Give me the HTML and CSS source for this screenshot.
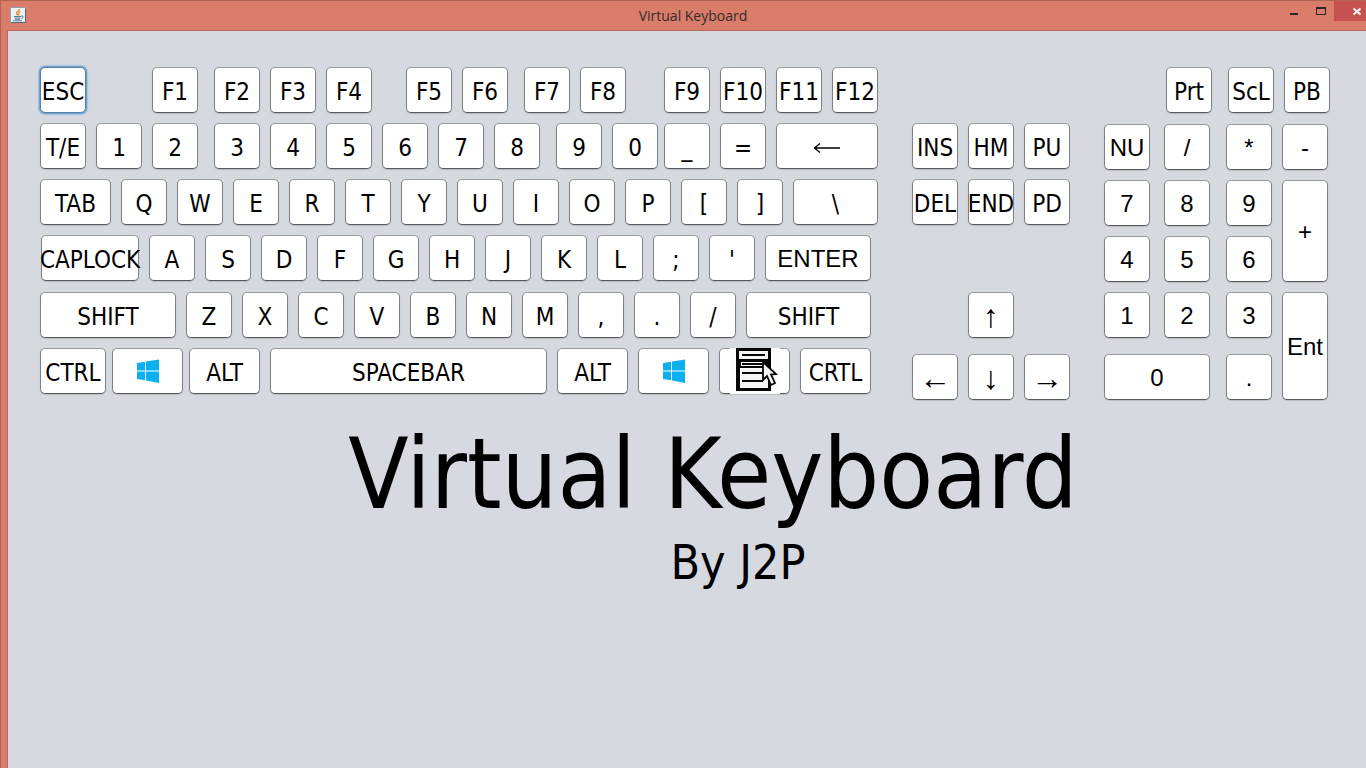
FILE: index.html
```html
<!DOCTYPE html>
<html lang="en">
<head>
<meta charset="utf-8">
<title>Virtual Keyboard</title>
<link rel="stylesheet" href="styles.css">
</head>
<body>
<div class="window">
  <header class="titlebar">
    <svg class="app-icon" viewBox="0 0 16 16" aria-hidden="true">
      <rect x="0.5" y="0.5" width="15" height="15" rx="1" fill="#eef1f3" stroke="#8fa3ad"/>
      <path d="M1 15.5h14.500v-14" fill="none" stroke="#4f6c7c"/>
      <path d="M9.500 2C9.500 4 6 4.500 6.500 6.500C6.700 7.500 7.800 7.700 7.800 8.500M10.500 4.500C8.500 5.200 8 6 8.800 7C9.200 7.600 8.800 8 8.400 8.500" fill="none" stroke="#e8892f" stroke-width="1.300"/>
      <path d="M4 9.500h7M4.500 11h6M5 12.300h5M3 13.800h9" fill="none" stroke="#557f9d"/>
      <path d="M11 9.200c3-.8 3 1.500.3 2.300" fill="none" stroke="#557f9d"/>
    </svg>
    <h2 class="caption">Virtual Keyboard</h2>
    <div class="controls">
      <button class="control" aria-label="Minimize"><svg viewBox="0 0 12 12"><path d="M2 7h8v2H2z" fill="#2a2628"/></svg></button>
      <button class="control" aria-label="Maximize"><svg viewBox="0 0 12 12"><path d="M1 1h10v8H1zM2 3v5h8V3z" fill="#2a2628" fill-rule="evenodd"/></svg></button>
      <button class="control close" aria-label="Close"><svg viewBox="0 0 12 12"><path d="M2.500 2.500l7 6M9.500 2.500l-7 6" stroke="#fff" stroke-width="2"/></svg></button>
    </div>
  </header>
  <main class="content">
    <div class="keyboard">
      <section class="typing" aria-label="Main keys">
        <div class="row">
          <div class="group"><button class="key focused">ESC</button></div>
          <div class="group after-esc"><button class="key">F1</button></div>
          <div class="group split"><button class="key">F2</button><button class="key">F3</button><button class="key">F4</button></div>
          <div class="group after-f4"><button class="key">F5</button><button class="key">F6</button></div>
          <div class="group split"><button class="key">F7</button><button class="key">F8</button></div>
          <div class="group after-f8"><button class="key">F9</button><button class="key">F10</button><button class="key">F11</button><button class="key">F12</button></div>
        </div>
        <div class="row">
          <div class="group"><button class="key">T/E</button><button class="key">1</button><button class="key">2</button></div>
          <div class="group split"><button class="key">3</button><button class="key">4</button><button class="key">5</button><button class="key">6</button><button class="key">7</button><button class="key">8</button></div>
          <div class="group split"><button class="key">9</button><button class="key">0</button></div>
          <div class="group tight"><button class="key">_</button><button class="key">=</button><button class="key backspace" aria-label="Backspace"><svg class="long-arrow" viewBox="0 0 28 12"><path d="M1 6h26M7 1.500L1.500 6L7 10.500" fill="none" stroke="#000" stroke-width="1.300"/></svg></button></div>
        </div>
        <div class="row">
          <div class="group"><button class="key wide">TAB</button><button class="key">Q</button><button class="key">W</button><button class="key">E</button><button class="key">R</button><button class="key">T</button><button class="key">Y</button><button class="key">U</button><button class="key">I</button><button class="key">O</button><button class="key">P</button><button class="key">[</button><button class="key">]</button><button class="key backslash">\</button></div>
        </div>
        <div class="row home">
          <div class="group"><button class="key caps">CAPLOCK</button><button class="key">A</button><button class="key">S</button><button class="key">D</button><button class="key">F</button><button class="key">G</button><button class="key">H</button><button class="key">J</button><button class="key">K</button><button class="key">L</button><button class="key">;</button><button class="key">'</button><button class="key enter plain">ENTER</button></div>
        </div>
        <div class="row">
          <div class="group"><button class="key shift-left">SHIFT</button><button class="key">Z</button><button class="key">X</button><button class="key">C</button><button class="key">V</button><button class="key">B</button><button class="key">N</button><button class="key">M</button><button class="key">,</button><button class="key">.</button><button class="key">/</button><button class="key shift-right">SHIFT</button></div>
        </div>
        <div class="row">
          <div class="group snug"><button class="key ctrl">CTRL</button><button class="key wide picture" aria-label="Windows"><svg class="windows" viewBox="0 0 24 26"><path d="M1 5l8-1.200v8.700H1zM10 3.600L23 1.500v11H10zM1 13.500h8v8.700L1 21zM10 13.500h13v11.500l-13-2.500z" fill="#0db0ef"/></svg></button><button class="key wide">ALT</button></div>
          <div class="group tail"><button class="key space">SPACEBAR</button><button class="key wide">ALT</button><button class="key wide picture" aria-label="Windows"><svg class="windows" viewBox="0 0 24 26"><path d="M1 5l8-1.200v8.700H1zM10 3.600L23 1.500v11H10zM1 13.500h8v8.700L1 21zM10 13.500h13v11.500l-13-2.500z" fill="#0db0ef"/></svg></button><button class="key wide picture" aria-label="Menu"><svg class="menu-icon" viewBox="0 0 50 46"><path d="M0 0h50v46H0z" fill="#fdfdfd"/><path d="M6 0h35v43H6z" fill="#050505"/><path d="M9 3h29v8H9zM11 14h22v4H11zM10 20h28v20H10z" fill="#f5f5f5"/><path d="M12 7h23M12 16h20M12 25h21M12 33h21" stroke="#080808" stroke-width="1.800"/><path d="M33 14v18l4-4l4 9l4-2l-4-8.500l5-.5z" fill="#f8f8f8" stroke="#080808" stroke-width="1.800"/></svg></button><button class="key wide">CRTL</button></div>
        </div>
      </section>
      <section class="nav" aria-label="Navigation keys">
        <button class="key">INS</button><button class="key">HM</button><button class="key">PU</button>
        <button class="key">DEL</button><button class="key">END</button><button class="key">PD</button>
        <button class="key arrow up">↑</button>
        <button class="key arrow left">←</button><button class="key arrow">↓</button><button class="key arrow">→</button>
      </section>
      <section class="pad" aria-label="Number pad">
        <div class="system"><button class="key">Prt</button><div class="group"><button class="key">ScL</button><button class="key">PB</button></div></div>
        <div class="numbers">
          <button class="key plain">NU</button><button class="key plain">/</button><button class="key plain">*</button><button class="key plain">-</button>
          <button class="key plain">7</button><button class="key plain">8</button><button class="key plain">9</button><button class="key plain plus">+</button>
          <button class="key plain">4</button><button class="key plain">5</button><button class="key plain">6</button>
          <button class="key plain">1</button><button class="key plain">2</button><button class="key plain">3</button><button class="key plain ent">Ent</button>
          <button class="key plain zero">0</button><button class="key plain">.</button>
        </div>
      </section>
    </div>
    <h1 class="title">Virtual Keyboard</h1>
    <p class="byline">By J2P</p>
  </main>
</div>
</body>
</html>
```
FILE: styles.css
```css
* { box-sizing: border-box; }
body {
  margin: 0;
  background: #d6d9e0;
  color: #000;
  font-family: "DejaVu Sans Condensed", "DejaVu Sans", sans-serif;
  overflow: hidden;
}
.window {
  display: flex;
  flex-direction: column;
  min-height: 100vh;
  padding-left: 7px;
  background: #d97d6a;
  border-left: 1px solid #ae6455;
  border-top: 1px solid #ae6455;
}
.titlebar {
  display: flex;
  align-items: flex-start;
  height: 29px;
}
.app-icon { width: 16px; height: 16px; margin: 6px 0 0 2px; }
.caption {
  flex: 1;
  margin: 0;
  padding-left: 80px;
  text-align: center;
  font: 14px/30px "Open Sans", "Noto Sans", sans-serif;
  color: #332b2b;
}
.controls { display: flex; }
.control {
  display: flex;
  justify-content: center;
  width: 27px;
  height: 20px;
  padding: 5px 0 0;
  border: 0;
  background: none;
}
.control svg { width: 12px; height: 12px; }
.close { width: 32px; padding-left: 14px; background: #c75050; }
.content {
  flex: 1;
  padding: 36px 36px 0 32px;
  background: #d6d9e0;
  border: solid #b86a5a;
  border-width: 1px 0 0 1px;
  margin-left: -1px;
}
.keyboard { display: flex; justify-content: space-between; gap: 34px; }
.typing { display: flex; flex-direction: column; gap: 10px; flex: none; }
.row { display: flex; }
.home { padding: 0 0 1px 1px; }
.group { display: flex; gap: 10px; }
.after-esc { margin-left: 66px; }
.split { margin-left: 16px; }
.after-f4 { margin-left: 34px; }
.after-f8 { margin-left: 38px; }
.tight { margin-left: 6px; }
.snug { gap: 6px; }
.tail { margin-left: 10px; }
.key {
  display: flex;
  align-items: center;
  justify-content: center;
  flex: none;
  width: 46px;
  height: 46px;
  padding: 4px 0 0;
  border: 1px solid #7d8288;
  border-top-color: #96999e;
  border-bottom-color: #565a5f;
  border-radius: 5px;
  background: #fff;
  box-shadow: 0 1px 1px #b9bcc3;
  color: #000;
  font: 24px/28px "DejaVu Sans Condensed", "DejaVu Sans", sans-serif;
  white-space: nowrap;
}
.plain, .arrow { padding-top: 2px; font-family: "Liberation Sans", Arial, sans-serif; }
.arrow { font-size: 32px; }
.focused { border-color: #587ea5; box-shadow: 0 0 0 1px #73a4d1, 0 0 1px 2px #a5bfdc; }
.wide { width: 71px; }
.ctrl { width: 66px; }
.caps { width: 98px; }
.backspace { width: 102px; }
.backslash { width: 85px; }
.enter { width: 106px; }
.shift-left { width: 136px; }
.shift-right { width: 125px; }
.space { width: 277px; }
.long-arrow { width: 28px; height: 12px; }
.windows { width: 24px; height: 26px; }
.picture { padding: 0; }
.menu-icon { width: 50px; height: 46px; flex: none; }
.nav {
  display: grid;
  grid-template-columns: repeat(3, 46px);
  grid-template-rows: 46px 103px 52px 46px;
  gap: 10px;
  align-content: start;
  flex: none;
  padding-top: 56px;
}
.up { grid-column: 2; }
.left { grid-column: 1; }
.pad { flex: none; }
.system { display: flex; justify-content: flex-end; gap: 16px; margin-bottom: 11px; }
.numbers {
  display: grid;
  grid-template-columns: 60px 62px 56px 48px;
  grid-template-rows: 56px 56px 56px 62px 46px;
}
.plus { grid-area: 2 / 4 / 4 / 5; height: 102px; }
.ent { grid-area: 4 / 4 / 6 / 5; height: 108px; }
.zero { grid-column: 1 / 3; width: 106px; }
.title {
  margin: 14px 0 0;
  padding-left: 56px;
  text-align: center;
  font-size: 98px;
  font-weight: 400;
  line-height: 120px;
}
.byline {
  margin: 0;
  padding-left: 106px;
  text-align: center;
  font-size: 48px;
  line-height: 56px;
}
```
